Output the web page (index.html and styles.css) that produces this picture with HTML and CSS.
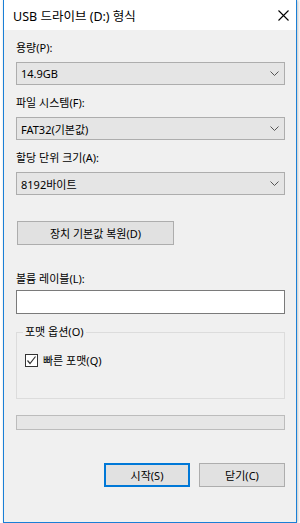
FILE: index.html
```html
<!DOCTYPE html>
<html>
<head>
    <meta charset="utf-8">
    <title>USB 드라이브 (D:) 형식</title>
    <link rel="stylesheet" href="styles.css">
</head>
<body>
    <div class="window">
        <div class="titlebar">
            <span class="title">USB 드라이브 (D:) 형식</span>
            <span class="close">
                <svg width="11" height="11" viewBox="0 0 11 11"><path d="M0.5 0.5 L10.5 10.5 M10.5 0.5 L0.5 10.5" stroke="#000" stroke-width="1.1" fill="none"/></svg>
            </span>
        </div>
        <div class="content">
            <div class="field-label">용량(P):</div>
            <div class="combo">
                <span>14.9GB</span>
                <svg class="chevron" width="9" height="5" viewBox="0 0 9 5"><polyline points="0.5,0.5 4.5,4.5 8.5,0.5" stroke="#555" fill="none"/></svg>
            </div>

            <div class="field-label">파일 시스템(F):</div>
            <div class="combo">
                <span>FAT32(기본값)</span>
                <svg class="chevron" width="9" height="5" viewBox="0 0 9 5"><polyline points="0.5,0.5 4.5,4.5 8.5,0.5" stroke="#555" fill="none"/></svg>
            </div>

            <div class="field-label">할당 단위 크기(A):</div>
            <div class="combo">
                <span>8192바이트</span>
                <svg class="chevron" width="9" height="5" viewBox="0 0 9 5"><polyline points="0.5,0.5 4.5,4.5 8.5,0.5" stroke="#555" fill="none"/></svg>
            </div>

            <div class="btn restore">장치 기본값 복원(D)</div>

            <div class="field-label volume-label">볼륨 레이블(L):</div>
            <div class="text-input"></div>

            <fieldset class="group">
                <legend>포맷 옵션(O)</legend>
                <div class="check-row">
                    <span class="checkbox">
                        <svg width="11" height="11" viewBox="0 0 11 11"><polyline points="1.5,5.5 4,8.5 9.5,1.5" stroke="#333" stroke-width="1.2" fill="none"/></svg>
                    </span>
                    <span>빠른 포맷(Q)</span>
                </div>
            </fieldset>

            <div class="progress"></div>

            <div class="actions">
                <div class="btn default">시작(S)</div>
                <div class="btn">닫기(C)</div>
            </div>
        </div>
    </div>
</body>
</html>
```

FILE: styles.css
```css
body {
    margin: 0;
    width: 300px;
    height: 523px;
    overflow: hidden;
    background-color: #fff;
    font-family: "Noto Sans", "Noto Sans CJK KR", sans-serif;
    font-size: 11px;
    color: #000;
}
.window {
    margin-left: 3px;
    width: 294px;
    height: 523px;
    box-sizing: border-box;
    border: 1px solid #1a7fd6;
    border-top: none;
    display: flex;
    flex-direction: column;
    box-shadow: 1px 0 3px rgba(0, 0, 0, 0.25);
}
.titlebar {
    height: 30px;
    flex-shrink: 0;
    background-color: #fff;
    display: flex;
    align-items: center;
    justify-content: space-between;
    padding: 0 7px 0 9px;
    font-size: 12.5px;
}
.close {
    display: flex;
}
.content {
    flex: 1;
    background-color: #f0f0f0;
    padding: 10px 11px 0 12px;
}
.field-label {
    line-height: 16px;
    height: 16px;
    margin-bottom: 6px;
}
.combo {
    height: 23px;
    box-sizing: border-box;
    border: 1px solid #adadad;
    background-color: #e5e5e5;
    display: flex;
    align-items: center;
    justify-content: space-between;
    padding: 0 5px 0 4px;
    margin-bottom: 10px;
}
.btn {
    height: 24px;
    box-sizing: border-box;
    border: 1px solid #adadad;
    background-color: #e1e1e1;
    display: flex;
    align-items: center;
    justify-content: center;
    width: 86px;
}
.restore {
    width: 157px;
    margin: 26px 0 0 1px;
}
.volume-label {
    margin-top: 26px;
    margin-bottom: 3px;
}
.text-input {
    height: 24px;
    box-sizing: border-box;
    border: 1px solid #7a7a7a;
    background-color: #fff;
}
.group {
    margin: 10px 0 0;
    padding: 0 8px 31px;
    border: 1px solid #dcdcdc;
}
.group legend {
    padding: 0 2px;
    margin-left: -2px;
    line-height: 16px;
}
.check-row {
    display: flex;
    align-items: center;
    gap: 5px;
    height: 14px;
    margin-top: 13px;
}
.checkbox {
    width: 13px;
    height: 13px;
    box-sizing: border-box;
    border: 1px solid #333;
    background-color: #fff;
    display: flex;
    align-items: center;
    justify-content: center;
}
.progress {
    margin-top: 16px;
    height: 15px;
    box-sizing: border-box;
    border: 1px solid #bcbcbc;
    background-color: #e6e6e6;
}
.actions {
    margin-top: 33px;
    display: flex;
    justify-content: flex-end;
    gap: 9px;
}
.btn.default {
    border: 2px solid #0078d7;
}
```
